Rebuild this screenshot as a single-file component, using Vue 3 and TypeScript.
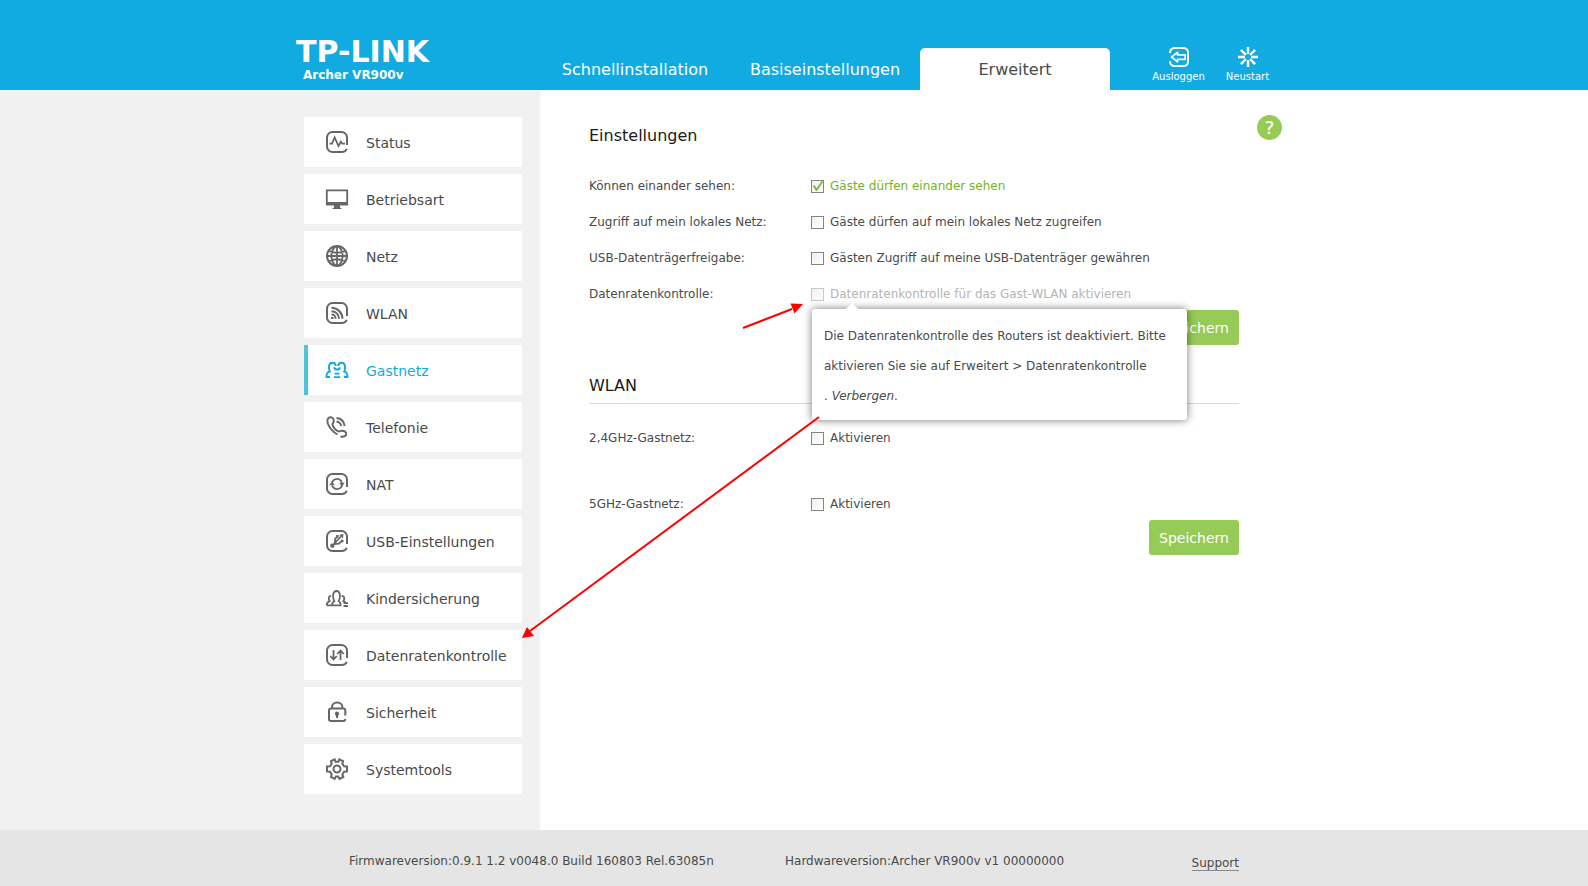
<script setup lang="ts">
import { reactive, ref } from 'vue'

interface NavItem {
  label: string
  frame?: boolean
  line?: string
  thin?: string
  fill?: string
}

const framePath = 'M21 14V6.500a5.500 5.500 0 0 0-5.500-5.500h-9A5.500 5.500 0 0 0 1 6.500v9A5.500 5.500 0 0 0 6.500 21h9c2.600 0 4.500-1 5.200-3.200'

const navItems: NavItem[] = [
  { label: 'Status', frame: true, thin: 'M3.500 12.700H6L8.700 6.500l3.800 8.500 2.400-4.300 1.500 2H19' },
  { label: 'Betriebsart', thin: 'M.8 2.300h20.400V16H.8z', fill: 'M0 14h22v3.500H0zM8 17.500h6v1.700l2 1.800H6l2-1.800z' },
  {
    label: 'Netz',
    line: 'M11 1a10 10 0 1 0 0 20a10 10 0 1 0 0-20',
    thin: 'M11 1v20M1 11h20M3 6c5 2.200 11 2.200 16 0M3 16c5-2.200 11-2.200 16 0M9.500 1.500c-5.500 5-5.500 14 0 19M12.500 1.500c5.500 5 5.500 14 0 19',
  },
  {
    label: 'WLAN',
    frame: true,
    line: 'M5.500 5.700c6 0 11 5 11 11M5.500 9.200c4.200 0 7.500 3.300 7.500 7.500M5.500 12.600c2.300 0 4.100 1.800 4.100 4.100',
    fill: 'M5 15h2.500v2H5z',
  },
  {
    label: 'Gastnetz',
    line: 'M4 18H.5c0-4 .8-4.800 3.200-5.500C2 8 3 3.700 6.500 3.700c2 0 3.200 1.300 3.200 3.300M18 18h3.500c0-4-.8-4.800-3.200-5.500C20 8 19 3.700 15.500 3.700c-2 0-3.200 1.300-3.200 3.300M8.300 8.200c0 3.200 5.400 3.200 5.400 0',
    thin: 'M8.500 14.600h5M7.800 18.200h6.400',
  },
  {
    label: 'Telefonie',
    line: 'M11.500 18.500C7 16 3.500 12 1.800 7.500.8 4 1.800 1.500 4.200 1.300c2.600-.2 3.900 2 3.500 4.200-.3 1.500-1.500 2-1.200 3.200.6 2.300 3.200 5.300 5.500 6.500 1.300.7 2.300-.4 3.800-.4 2.700 0 4.800 1.500 4.400 3.500-.4 1.700-2.800 2.700-5.700 2.200',
    thin: 'M10.500 2c4.500.5 7.500 3.500 8.200 8M10.500 5.500c2.600.4 4.200 1.800 4.900 4.500',
  },
  {
    label: 'NAT',
    frame: true,
    thin: 'M5.800 10.800a5.200 5.200 0 0 1 9-3.200l1.200 2M16.200 11.200a5.200 5.200 0 0 1-9 3.200L6 12.500',
    fill: 'M3.200 12.200l3-3.600 2.400 3.600zM18.800 9.800l-3 3.600-2.400-3.600z',
  },
  {
    label: 'USB-Einstellungen',
    frame: true,
    thin: 'M6.500 15.500L15 6.500M8.700 13l.6-4.300 2-2M8 14l4.800-.3 3-2.700',
    fill: 'M17.500 4l-.6 4.500-3.800-3.700zM10.200 5h2.500v2.500h-2.500zM15 9.700h2.500v2.500H15zM6.300 13.500a2.200 2.200 0 1 0 .1 0z',
  },
  {
    label: 'Kindersicherung',
    thin: 'M.8 18.400c0-2.600.8-3.600 2.800-4.300C2 10.500 3 8.800 5.200 8.800M.8 18.400H14.500v-2c0-1-.8-1.600-1.800-2.200 2-3.600 1.800-10.200-2.200-10.200S6.300 10.600 8.300 14.200c-1.500.7-2.300 1.800-2.300 4.200M15.500 8.800c3.300 0 3.300 3.200 1.800 5.400 1 .4 1.800.8 2.200 1.500M17.500 16.200h4.500M17.500 19h4.500',
  },
  {
    label: 'Datenratenkontrolle',
    frame: true,
    thin: 'M7.500 6v9M4.200 12l3.300 3.500 3.300-3.500M14.500 16V7M11.200 10l3.300-3.500 3.300 3.500',
  },
  {
    label: 'Sicherheit',
    line: 'M19.300 14.500V9.600a2 2 0 0 0-2-2H5a2 2 0 0 0-2 2V18a2 2 0 0 0 2 2h12.300c1.200 0 2-.8 2-2M6 7.500V6a5.200 4.500 0 0 1 10.400 0v1.500',
    fill: 'M11 10.500a2.200 2.200 0 0 1 1 4.100V17h-2v-2.400a2.200 2.200 0 0 1 1-4.100z',
  },
  {
    label: 'Systemtools',
    line: 'M8.700 1.300l.8 2.500h3l.8-2.500 3.700 1.700-.6 2.700 1.700 2.500 2.900.2v5l-2.900.3-1.700 2.600.9 2.600-3.800 2-1.400-2.500H9.900L8.700 20.900 5 19l.7-2.800-1.700-2.500-3-.3v-5l3-.2 1.700-2.500L5 3zM11 7.500a3.500 3.500 0 1 0 0 7a3.500 3.500 0 1 0 0-7',
  },
]

const activeNav = ref('Gastnetz')
const tabs = ['Schnellinstallation', 'Basiseinstellungen', 'Erweitert']
const activeTab = ref('Erweitert')
const hintOpen = ref(true)

const permissions = reactive([
  { id: 'see', name: 'Können einander sehen:', text: 'Gäste dürfen einander sehen', on: true, disabled: false },
  { id: 'lan', name: 'Zugriff auf mein lokales Netz:', text: 'Gäste dürfen auf mein lokales Netz zugreifen', on: false, disabled: false },
  { id: 'usb', name: 'USB-Datenträgerfreigabe:', text: 'Gästen Zugriff auf meine USB-Datenträger gewähren', on: false, disabled: false },
  { id: 'rate', name: 'Datenratenkontrolle:', text: 'Datenratenkontrolle für das Gast-WLAN aktivieren', on: false, disabled: true },
])

const bands = reactive([
  { id: 'g24', name: '2,4GHz-Gastnetz:', on: false },
  { id: 'g5', name: '5GHz-Gastnetz:', on: false },
])
</script>

<template>
  <div class="page">
    <header class="header">
      <div class="header-inner">
        <div class="brand">
          <div class="logo">TP-LINK</div>
          <div class="model">Archer VR900v</div>
        </div>
        <nav class="tabs">
          <button
            v-for="tab in tabs"
            :key="tab"
            type="button"
            class="tab"
            :class="{ active: tab === activeTab }"
            @click="activeTab = tab"
          >{{ tab }}</button>
        </nav>
        <div class="utils">
          <button type="button" class="util">
            <svg viewBox="0 0 20 20" fill="none" stroke="currentColor" stroke-width="2">
              <path d="M1 6V5.500A4.500 4.500 0 0 1 5.500 1h9A4.500 4.500 0 0 1 19 5.500v9a4.500 4.500 0 0 1-4.500 4.500h-9A4.500 4.500 0 0 1 1 14.500V14" />
              <path stroke-width="1.700" stroke-linejoin="round" d="M2.500 10l6-4.700v2.500h7.700v4.500H8.500v2.500z" />
            </svg>
            <span>Ausloggen</span>
          </button>
          <button type="button" class="util">
            <svg viewBox="0 0 20 20" fill="none" stroke="currentColor" stroke-width="2.400">
              <path d="M10 0v7M10 13v7M0 10h7M13 10h7M2.900 2.900l5 5M12.100 12.100l5 5M17.100 2.900l-5 5M7.900 12.100l-5 5" />
            </svg>
            <span>Neustart</span>
          </button>
        </div>
      </div>
    </header>

    <div class="body">
      <aside class="sidebar">
        <nav class="menu">
          <a
            v-for="item in navItems"
            :key="item.label"
            href="#"
            class="menu-item"
            :class="{ active: item.label === activeNav }"
            @click.prevent="activeNav = item.label"
          >
            <svg class="menu-icon" viewBox="0 0 22 22" fill="none" stroke="currentColor">
              <path v-if="item.frame" :d="framePath" stroke-width="2" />
              <path v-if="item.line" :d="item.line" stroke-width="2" />
              <path v-if="item.thin" :d="item.thin" stroke-width="1.800" />
              <path v-if="item.fill" :d="item.fill" fill="currentColor" stroke="none" />
            </svg>
            <span>{{ item.label }}</span>
          </a>
        </nav>
      </aside>

      <main class="content">
        <form class="form" @submit.prevent>
          <h2 class="heading">Einstellungen</h2>
          <div v-for="row in permissions" :key="row.id" class="row">
            <span class="name">{{ row.name }}</span>
            <div class="control">
              <label class="check" :class="{ on: row.on, disabled: row.disabled }" :for="row.id">
                <input :id="row.id" v-model="row.on" type="checkbox" :disabled="row.disabled" />
                <span>{{ row.text }}</span>
              </label>
              <div v-if="row.disabled && hintOpen" class="hint" role="tooltip">
                Die Datenratenkontrolle des Routers ist deaktiviert. Bitte aktivieren Sie sie auf Erweitert &gt; Datenratenkontrolle<br />.
                <a href="#" @click.prevent="hintOpen = false">Verbergen</a>.
              </div>
            </div>
          </div>
          <button type="submit" class="save">Speichern</button>

          <h2 class="heading ruled">WLAN</h2>
          <div v-for="band in bands" :key="band.id" class="row band">
            <span class="name">{{ band.name }}</span>
            <div class="control">
              <label class="check" :class="{ on: band.on }" :for="band.id">
                <input :id="band.id" v-model="band.on" type="checkbox" />
                <span>Aktivieren</span>
              </label>
            </div>
          </div>
          <button type="submit" class="save">Speichern</button>
        </form>
        <button type="button" class="help" aria-label="Hilfe">?</button>

        <svg class="arrows" viewBox="0 0 300 560" aria-hidden="true">
          <g stroke="#fe0000" stroke-width="2" fill="#fe0000">
            <path d="M223 238L272 219" />
            <path d="M283 214l-12.500-.5 4 10z" stroke="none" />
            <path d="M299 327L10 541" />
            <path d="M2 548l5-11 7 9z" stroke="none" />
          </g>
        </svg>
      </main>
    </div>

    <footer class="footer">
      <div class="footer-inner">
        <span class="firmware">Firmwareversion:0.9.1 1.2 v0048.0 Build 160803 Rel.63085n</span>
        <span>Hardwareversion:Archer VR900v v1 00000000</span>
        <a href="#" class="support">Support</a>
      </div>
    </footer>
  </div>
</template>

<style>
body {
  margin: 0;
}
</style>

<style scoped>
.page {
  min-height: 100vh;
  display: flex;
  flex-direction: column;
  background: #fff;
  color: #4a4a4a;
  font-family: Verdana, "DejaVu Sans", sans-serif;
  font-size: 12px;
  line-height: 24px;
}

button {
  font: inherit;
  border: 0;
  padding: 0;
  cursor: pointer;
}

/* header */
.header {
  background: #11abe2;
  color: #fff;
}

.header-inner {
  max-width: 980px;
  height: 90px;
  margin: 0 auto;
  display: flex;
  align-items: flex-end;
}

.brand {
  width: 244px;
  margin-left: -8px;
  padding-bottom: 8px;
}

.logo {
  font-size: 30px;
  font-weight: bold;
  line-height: 32px;
}

.model {
  padding-left: 7px;
  font-weight: bold;
  line-height: 14px;
}

.tabs {
  display: flex;
}

.tab {
  width: 190px;
  height: 42px;
  padding-top: 2px;
  background: transparent;
  color: #fff;
  font-size: 16px;
  text-align: center;
}

.tab.active {
  background: #fff;
  color: #4a4a4a;
  border-radius: 5px 5px 0 0;
}

.utils {
  display: flex;
  margin-left: auto;
  padding: 0 2px 7px 0;
}

.util {
  width: 69px;
  display: flex;
  flex-direction: column;
  align-items: center;
  gap: 4px;
  background: transparent;
  color: #fff;
  font-size: 10px;
  line-height: 12px;
}

.util svg {
  width: 20px;
  height: 20px;
}

/* body */
.body {
  flex: 1;
  display: flex;
}

.sidebar {
  box-sizing: border-box;
  flex: none;
  width: max(236px, calc(50% - 254px));
  padding: 27px 18px 36px 0;
  display: flex;
  justify-content: flex-end;
  background: #f1f1f1;
}

.menu {
  width: 218px;
  display: flex;
  flex-direction: column;
  gap: 7px;
}

.menu-item {
  box-sizing: border-box;
  height: 50px;
  padding-left: 18px;
  border-left: 4px solid #fff;
  display: flex;
  align-items: center;
  gap: 18px;
  background: #fff;
  color: #4a4a4a;
  font-size: 14px;
  text-decoration: none;
}

.menu-item span {
  padding-top: 2px;
}

.menu-item.active {
  border-left-color: #4fc3dc;
  color: #11abe2;
}

.menu-icon {
  width: 22px;
  height: 22px;
  overflow: visible;
  color: #666;
}

.menu-item.active .menu-icon {
  color: #11abe2;
}

.content {
  position: relative;
  flex: 1;
  max-width: 744px;
  display: flex;
  align-items: flex-start;
}

.form {
  flex: 1;
  max-width: 650px;
  margin-left: 49px;
  padding-top: 34px;
}

.heading {
  margin: 0 0 26px;
  color: #1a1a1a;
  font-size: 16px;
  font-weight: normal;
  line-height: 24px;
}

.row {
  display: flex;
  margin-bottom: 12px;
}

.row:has(+ .save) {
  margin-bottom: 4px;
}

.name {
  width: 222px;
}

.control {
  position: relative;
}

.check {
  display: flex;
  align-items: center;
  gap: 6px;
}

.check.on {
  color: #76b226;
}

.check.disabled {
  color: #b4b4b4;
}

.check input {
  appearance: none;
  position: relative;
  box-sizing: border-box;
  width: 13px;
  height: 13px;
  margin: 0;
  border: 1px solid #858585;
  background: linear-gradient(135deg, #f0f0f0, #fff);
}

.check input:disabled {
  border-color: #c8c8c8;
}

.check input:checked::after {
  content: "";
  position: absolute;
  inset: -1px;
  background: #76b83a;
  clip-path: polygon(15% 50%, 26% 42%, 43% 67%, 90% 0, 100% 8%, 46% 88%, 38% 88%);
}

.hint {
  position: absolute;
  z-index: 1;
  top: 27px;
  left: 1px;
  box-sizing: border-box;
  width: 375px;
  padding: 12px 12px 9px;
  border-radius: 3px;
  background: #fff;
  box-shadow: 0 0 8px rgba(0, 0, 0, 0.55);
  line-height: 30px;
}

.hint::before {
  content: "";
  position: absolute;
  top: -6px;
  left: 34px;
  width: 12px;
  height: 6px;
  background: #fff;
  clip-path: polygon(50% 0, 100% 100%, 0 100%);
}

.hint a {
  color: inherit;
  font-style: italic;
  text-decoration: none;
}

.save {
  display: block;
  width: 90px;
  height: 35px;
  margin-left: auto;
  border-radius: 3px;
  background: #96cb57;
  color: #fff;
  font-size: 14px;
}

.heading.ruled {
  margin: 29px 0 22px;
  padding-bottom: 5px;
  border-bottom: 1px solid #d8d8d8;
}

.row.band:has(+ .band) {
  margin-bottom: 42px;
}

.help {
  width: 25px;
  height: 25px;
  margin: 25px 0 0 18px;
  border-radius: 50%;
  background: #96cb57;
  color: #fff;
  font-family: "Open Sans", sans-serif;
  font-size: 18px;
  font-weight: 600;
  line-height: 25px;
}

.arrows {
  position: absolute;
  z-index: 2;
  top: 0;
  left: -20px;
  width: 300px;
  height: 560px;
  pointer-events: none;
}

/* footer */
.footer {
  background: #e5e5e5;
}

.footer-inner {
  box-sizing: border-box;
  max-width: 980px;
  margin: 0 auto;
  padding: 19px 45px 13px;
  display: flex;
  align-items: center;
}

.firmware {
  flex: none;
  width: 436px;
}

.support {
  margin-left: auto;
  margin-top: 4px;
  color: inherit;
  line-height: 14px;
  text-decoration: none;
  border-bottom: 1px solid #8a8a8a;
}
</style>
